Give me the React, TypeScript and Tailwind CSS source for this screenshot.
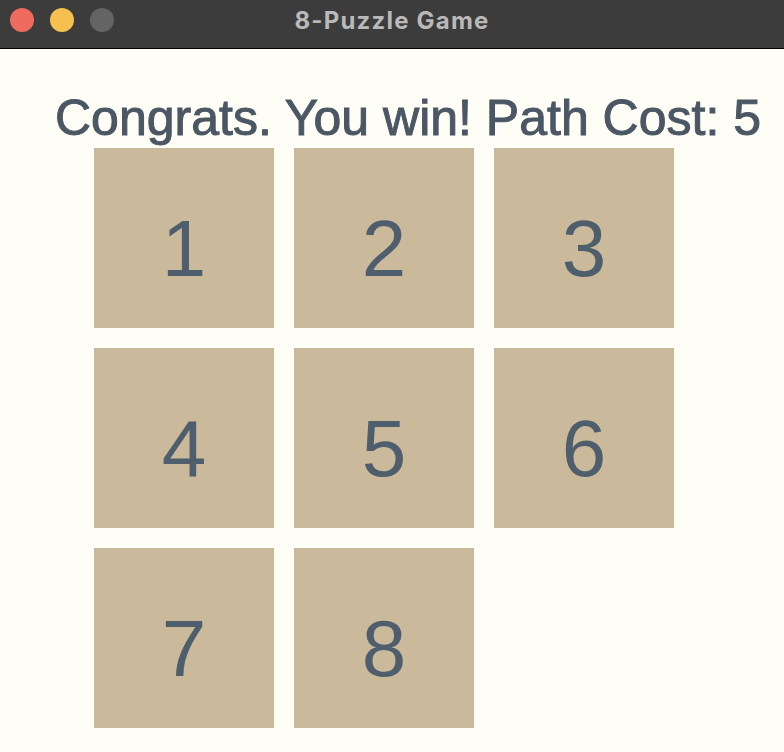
const tiles = [1, 2, 3, 4, 5, 6, 7, 8, null]

function TitleBar() {
  return (
    <div className="relative flex h-[49px] items-center border-b border-black bg-[#3c3c3c]">
      <div className="flex gap-4 pl-[10px] pb-[8px]">
        <span className="h-6 w-6 rounded-full bg-[#ee6b60]" />
        <span className="h-6 w-6 rounded-full bg-[#f5c04f]" />
        <span className="h-6 w-6 rounded-full bg-[#646464]" />
      </div>
      <div className="absolute inset-x-0 top-[3px] text-center font-['Inter',sans-serif] text-[24px] font-bold tracking-[1.2px] text-[#b9b9b9]">
        8-Puzzle Game
      </div>
    </div>
  )
}

export default function App() {
  return (
    <div className="h-[752px] w-[784px] overflow-hidden bg-[#fffef6] font-['Liberation_Sans',Arial,sans-serif]">
      <TitleBar />
      <h1 className="mt-[44px] whitespace-nowrap pl-[55px] text-[50px] leading-[50px] text-[#4b5764] [-webkit-text-stroke:1px_#4b5764]">
        Congrats. You win! Path Cost: 5
      </h1>
      <div className="mt-[5px] grid w-fit grid-cols-[180px_180px_180px] gap-5 pl-[94px]">
        {tiles.map((n, i) =>
          n === null ? (
            <div key={i} className="h-[180px] w-[180px]" />
          ) : (
            <div
              key={i}
              className="flex h-[180px] w-[180px] items-center justify-center bg-[#cbb99c] pt-[21px] text-[80px] text-[#4f5e6d]"
            >
              {n}
            </div>
          )
        )}
      </div>
    </div>
  )
}
